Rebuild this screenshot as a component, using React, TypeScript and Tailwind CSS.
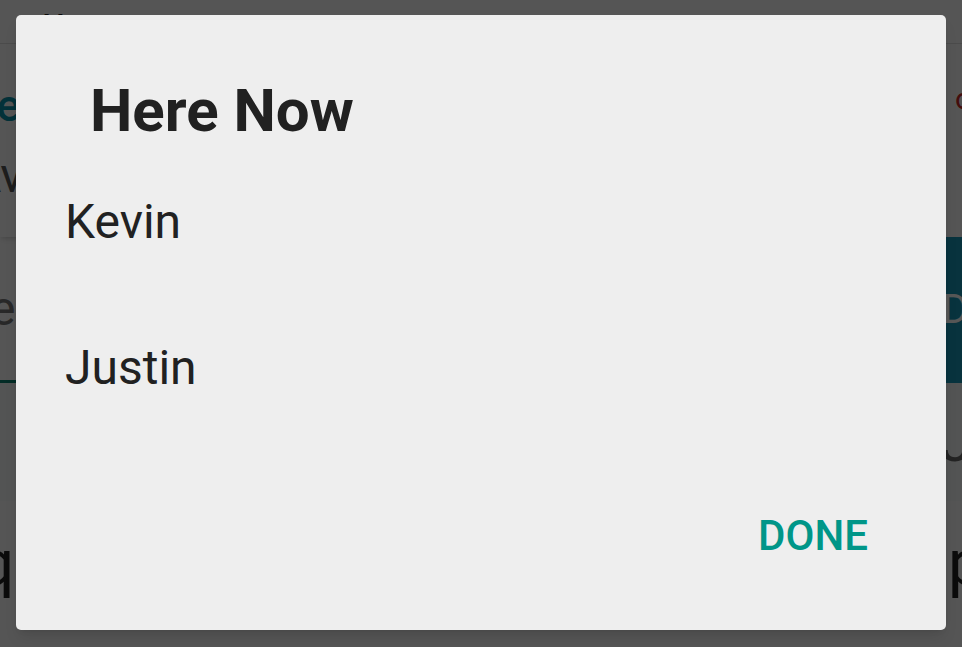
import React from "react";

const names = ["Kevin", "Justin"];

const Backdrop = () => (
  <div className="flex h-[647px] flex-col bg-[#fafafa] font-['Roboto',sans-serif] text-[#212121]">
    <div className="flex h-[44px] items-end border-b border-[#dddddd] pl-[44px]">
      <span className="text-[40px] leading-none">y</span>
    </div>
    <div className="flex h-[193px] flex-col gap-6 pt-[40px] shadow-md">
      <div className="flex justify-between">
        <span className="-ml-[28px] text-[44px] font-medium leading-none text-[#0a90a8]">ne</span>
        <span className="mr-[-10px] text-[30px] leading-none text-[#c62828]">o</span>
      </div>
      <span className="-ml-[30px] text-[48px] leading-none text-[#555]">Av</span>
    </div>
    <div className="flex h-[146px]">
      <div className="flex flex-1 items-center border-b-[3px] border-[#0a8070]">
        <span className="-ml-[10px] text-[48px] leading-none text-[#777]">e</span>
      </div>
      <div className="flex w-[20px] items-center bg-[#1a95b5] text-[40px] text-white">D</div>
    </div>
    <div className="flex h-[118px] items-center justify-end bg-[#f4f6f6]">
      <span className="-mr-[10px] text-[56px] leading-none text-[#666]">J</span>
    </div>
    <div className="flex flex-1 items-center justify-between pb-[20px]">
      <span className="-ml-[22px] text-[64px] leading-none">q</span>
      <span className="-mr-[22px] text-[64px] leading-none">p</span>
    </div>
  </div>
);

export default function App() {
  return (
    <div className="relative h-[647px] w-[962px] overflow-hidden">
      <Backdrop />
      <div className="absolute inset-0 bg-black/[0.66]" />
      <div className="absolute left-[16px] top-[15px] flex h-[615px] w-[930px] flex-col rounded-[5px] bg-[#eeeeee] font-['Roboto',sans-serif] text-[#212121] shadow-lg">
        <h1 className="ml-[74px] mt-[66px] text-[60px] font-bold leading-none">Here Now</h1>
        <ul className="ml-[49px] mt-[57px] flex flex-col gap-[98px]">
          {names.map((name) => (
            <li key={name} className="text-[48px] leading-none">
              {name}
            </li>
          ))}
        </ul>
        <div className="mr-[78px] mt-[123px] flex justify-end">
          <button className="text-[42px] font-medium leading-none text-[#009688]">DONE</button>
        </div>
      </div>
    </div>
  );
}
